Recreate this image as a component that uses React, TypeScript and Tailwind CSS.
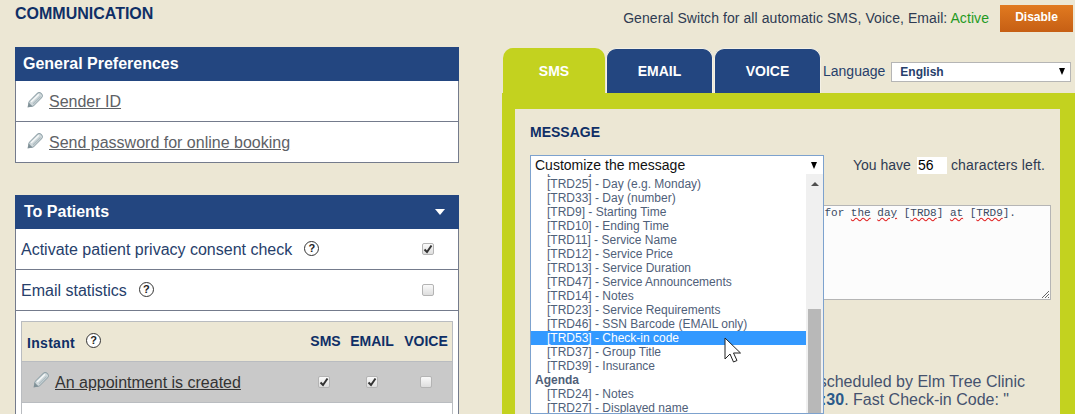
const ROWS_A = [
  "[TRD26] - Service Month",
  "[TRD25] - Day (e.g. Monday)",
  "[TRD33] - Day (number)",
  "[TRD9] - Starting Time",
  "[TRD10] - Ending Time",
  "[TRD11] - Service Name",
  "[TRD12] - Service Price",
  "[TRD13] - Service Duration",
  "[TRD47] - Service Announcements",
  "[TRD14] - Notes",
  "[TRD23] - Service Requirements",
  "[TRD46] - SSN Barcode (EMAIL only)",
];

function Pencil() {
  return (
    <svg width="16" height="16" viewBox="0 0 16 16" className="mb-[4px] shrink-0">
      <path d="M5 11 12.2 3.8" stroke="#8d9fa6" strokeWidth="7" strokeLinecap="round" fill="none" />
      <path d="M5 11 12.2 3.8" stroke="#cfd8db" strokeWidth="5.4" strokeLinecap="round" fill="none" />
      <path d="M4.5 9.5 11.5 2.8" stroke="#f7f9f9" strokeWidth="1.4" strokeLinecap="round" fill="none" />
      <path d="M6.5 11.5 13.2 4.8" stroke="#aebcc1" strokeWidth="1.2" strokeLinecap="round" fill="none" />
      <path d="M.5 15.5 1.6 10.4 5.6 14.4z" fill="#7f9097" />
    </svg>
  );
}

function Help() {
  return (
    <span className="mb-[3px] flex h-[15px] w-[15px] shrink-0 items-center justify-center rounded-full border border-[#333] bg-white text-[11px] leading-none font-bold text-[#222]">
      ?
    </span>
  );
}

function Check({ on, className }: { on?: boolean; className?: string }) {
  return (
    <span className={`flex h-[12px] w-[12px] shrink-0 items-center justify-center rounded-[2px] border border-[#b4b4b4] bg-gradient-to-b from-[#fafafa] to-[#dedede] ${className ?? ""}`}>
      {on && (
        <svg width="10" height="10" viewBox="0 0 10 10">
          <path d="M1.5 5.5 4 8 8.5 1.5" stroke="#333" strokeWidth="2" fill="none" />
        </svg>
      )}
    </span>
  );
}

function Panel({ title, arrow, children }: { title: string; arrow?: boolean; children: React.ReactNode }) {
  return (
    <section className="w-[444px]">
      <div className={arrow ? "flex h-[34px] items-center justify-between bg-[#234680] pr-[14px] pl-[9px] text-[16px] font-bold text-white" : "flex h-[34px] items-center justify-between bg-[#234680] pr-[14px] pl-[8px] text-[16px] font-bold text-white"}>
        {title}
        {arrow && <span className="h-0 w-0 border-x-[5px] border-t-[6px] border-x-transparent border-t-white" />}
      </div>
      <div className="border-x border-b border-[#747b8c] bg-white">{children}</div>
    </section>
  );
}

function LinkRow({ label }: { label: string }) {
  return (
    <div className="flex h-[41px] items-center gap-[6px] border-b border-[#747b8c] pt-[2px] pl-[11px] last:h-[40px] last:border-b-0">
      <Pencil />
      <a className="text-[16px] text-[#5e6166] underline">{label}</a>
    </div>
  );
}

function Tab({ label, active }: { label: string; active?: boolean }) {
  return active ? (
    <div className="flex h-[45px] w-[102px] items-center justify-center rounded-t-[10px] bg-[#c3d21f] pt-[1px] text-[14px] font-bold text-white">
      {label}
    </div>
  ) : (
    <div className="flex h-[45px] w-[107px] items-center justify-center rounded-t-[10px] border-x border-t border-[#f4f1e6] bg-[#234680] pt-[1px] text-[14px] font-bold text-white">
      {label}
    </div>
  );
}

function ListRow({ label, selected }: { label: string; selected?: boolean }) {
  return (
    <div className={selected ? "h-[14px] bg-[#3399ff] pl-[16px] text-[12px] leading-[14px] text-white" : "h-[14px] pl-[16px] text-[12px] leading-[14px] text-[#4f6079]"}>
      {label}
    </div>
  );
}

const spell = "underline decoration-[#e02020] decoration-wavy";

export default function App() {
  return (
    <div className="flex h-[414px] w-[1075px] gap-[43px] overflow-hidden bg-[#ece7d4] pl-[15px] font-['Liberation_Sans',Arial,sans-serif] text-[#27406b]">
      <div className="w-[444px] shrink-0">
        <h1 className="mt-[5px] h-[42px] text-[16px] leading-[17px] font-bold text-[#0f2f66]">COMMUNICATION</h1>
        <Panel title="General Preferences">
          <LinkRow label="Sender ID" />
          <LinkRow label="Send password for online booking" />
        </Panel>
        <div className="h-[32px]" />
        <Panel title="To Patients" arrow>
          <div className="flex h-[41px] items-center justify-between border-b border-[#747b8c] pt-[2px] pr-[24px] pl-[5px] text-[16px]">
            <span className="flex items-center gap-[12px]">
              Activate patient privacy consent check
              <Help />
            </span>
            <Check on className="mb-[3px]" />
          </div>
          <div className="flex h-[41px] items-center justify-between border-b border-[#747b8c] pt-[2px] pr-[24px] pl-[5px] text-[16px]">
            <span className="flex items-center gap-[12px]">
              Email statistics
              <Help />
            </span>
            <Check className="mb-[3px]" />
          </div>
          <div className="px-[5px] pt-[10px] pb-[10px]">
            <div className="border border-[#b9bcc0]">
              <div className="flex h-[40px] items-center border-b border-[#b9bcc0] bg-[#ece7d4] pr-[2px] pl-[5px] text-[14px] font-bold text-[#0f2f66]">
                <span className="flex flex-1 items-center gap-[11px]">
                  <span className="pt-[4px] tracking-[0.3px]">Instant</span>
                  <Help />
                </span>
                <span className="w-[39px] text-center">SMS</span>
                <span className="w-[54px] text-center">EMAIL</span>
                <span className="ml-[3px] w-[48px] text-center">VOICE</span>
              </div>
              <div className="flex h-[41px] items-center border-b border-[#b9bcc0] bg-[#c9c9c9] pr-[20px] pl-[11px]">
                <Pencil />
                <a className="ml-[6px] flex-1 pt-[2px] text-[16px] text-[#333] underline">An appointment is created</a>
                <Check on />
                <span className="w-[36px]" />
                <Check on />
                <span className="w-[42px]" />
                <Check />
              </div>
              <div className="flex h-[41px] items-center bg-white pl-[11px]">
                <Pencil />
              </div>
            </div>
          </div>
        </Panel>
      </div>

      <div className="w-[573px] shrink-0">
        <div className="flex h-[48px] items-start pt-[5px]">
          <div className="flex h-[27px] w-[571px] items-center justify-end gap-[11px] text-[14px]">
            <span className="tracking-[0.07px] text-[#2e3b52]">
              General Switch for all automatic SMS, Voice, Email: <span className="text-[#1f9a1f]">Active</span>
            </span>
            <button className="h-[27px] w-[73px] bg-gradient-to-b from-[#e17a20] to-[#c65f14] pb-[4px] text-[12px] font-bold text-white">
              Disable
            </button>
          </div>
        </div>
        <div className="flex h-[45px] items-start gap-[1px] pl-[1px]">
          <Tab label="SMS" active />
          <Tab label="EMAIL" />
          <Tab label="VOICE" />
          <div className="mt-[13px] ml-[1px] flex items-center gap-[6px] text-[14px]">
            Language
            <div className="flex h-[20px] w-[180px] items-center justify-between border border-[#b5b5b5] bg-white pr-[5px] pl-[8px] text-[12px] font-bold">
              English
              <span className="h-0 w-0 border-x-[3.5px] border-t-[7px] border-x-transparent border-t-black" />
            </div>
          </div>
        </div>
        <div className="h-[321px] border-t-[16px] border-r-[15px] border-l-[13px] border-[#c3d21f] bg-[#ece7d4]">
          <div className="relative h-[305px] pt-[15px] pl-[15px]">
            <h2 className="text-[14px] leading-[16px] font-bold text-[#0f2f66]">MESSAGE</h2>
            <div className="mt-[15px] flex h-[20px] items-center">
              <div className="flex h-[20px] w-[294px] items-center justify-between border border-[#7da2ce] bg-white pr-[6px] pl-[4px] text-[14px] text-[#111]">
                Customize the message
                <span className="h-0 w-0 border-x-[3.5px] border-t-[7px] border-x-transparent border-t-black" />
              </div>
              <span className="ml-[29px] flex items-center text-[14px] text-[#2e3b52]">
                You have
                <span className="mr-[4px] ml-[6px] h-[17px] w-[30px] bg-white pl-[1px] text-[14px] leading-[17px] text-black">56</span>
                <span className="tracking-[0.15px]">characters left.</span>
              </span>
            </div>
            <div className="relative mt-[30px] h-[95px] w-[521px] border border-[#b5b5b5] bg-[#fcfcfc] pt-[1px] pl-[3px] font-['Liberation_Mono',monospace] text-[11px] leading-[13px] whitespace-pre text-[#3a4a63]">
              {"Your appointment with [TRD1] has been fixed for "}
              <span className={spell}>the</span> <span className={spell}>day</span> [<span className={spell}>TRD8</span>]{" "}
              <span className={spell}>at</span> [<span className={spell}>TRD9</span>].
              <svg width="10" height="10" viewBox="0 0 10 10" className="absolute right-0 bottom-0">
                <path d="M2 9 9 2M5 9 9 5M8 9 9 8" stroke="#666" strokeWidth="1" fill="none" />
              </svg>
            </div>
            <div className="mt-[73px] flex w-[495px] flex-col items-end text-[16px] leading-[18px] text-[#45526e]">
              <div>Your appointment has been scheduled by Elm Tree Clinic</div>
              <div className="mr-[16px]">
                for the day 12/05 at <b className="text-[#2b5a8a]">10:30</b>. Fast Check-in Code: "
              </div>
            </div>
            <div className="absolute top-[65px] left-[15px] flex h-[240px] w-[294px] border-x border-b border-[#7da2ce] bg-white">
              <div className="h-full flex-1 overflow-hidden">
                <div className="-mt-[11px]">
                  {ROWS_A.map((r) => (
                    <ListRow key={r} label={r} />
                  ))}
                  <ListRow label="[TRD53] - Check-in code" selected />
                  <ListRow label="[TRD37] - Group Title" />
                  <ListRow label="[TRD39] - Insurance" />
                  <div className="h-[14px] pl-[4px] text-[12px] leading-[14px] font-bold text-[#4f6079]">Agenda</div>
                  <ListRow label="[TRD24] - Notes" />
                  <ListRow label="[TRD27] - Displayed name" />
                </div>
              </div>
              <div className="flex w-[17px] flex-col items-center bg-[#f0f0f0]">
                <span className="mt-[8px] h-0 w-0 border-x-[4px] border-b-[4px] border-x-transparent border-b-[#505050]" />
                <span className="mt-[123px] h-[110px] w-[13px] bg-[#b8b8b8]" />
              </div>
            </div>
            <svg width="18" height="26" viewBox="0 0 18 26" className="absolute top-[228px] left-[209px]">
              <path d="M1 1V22L6 17 9.5 25 13 23.5 9.5 16H16.5z" fill="#fff" stroke="#222" strokeWidth="1" />
            </svg>
          </div>
        </div>
      </div>
    </div>
  );
}
